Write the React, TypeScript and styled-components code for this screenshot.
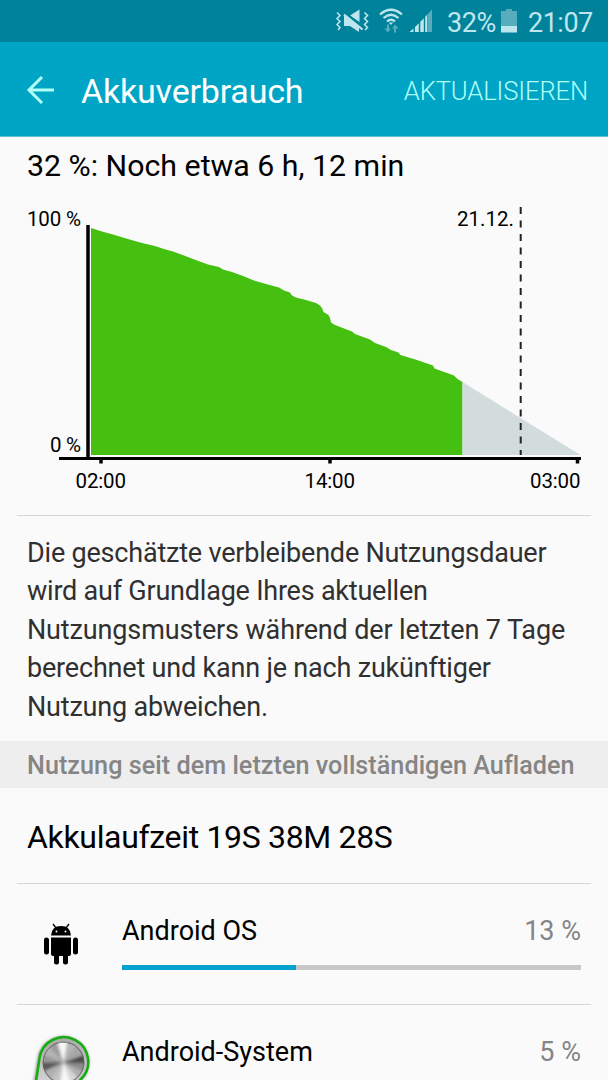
import React from "react";
import styled, { createGlobalStyle } from "styled-components";

const GlobalStyle = createGlobalStyle`
  html, body { margin: 0; padding: 0; height: 1080px; overflow: hidden; background: #fafafa; }
  * { box-sizing: border-box; }
`;

const Screen = styled.div`
  width: 608px;
  height: 1080px;
  overflow: hidden;
  background: #fafafa;
  color: #000;
  font-family: Roboto, "Liberation Sans", sans-serif;
  display: flex;
  flex-direction: column;
  & > * { flex-shrink: 0; }
`;

const StatusBar = styled.div`
  height: 42px;
  background: #00829b;
  color: #bfe6ee;
  display: flex;
  align-items: center;
  justify-content: flex-end;
  padding: 5px 16px 0 0;
  font-size: 27px;
  line-height: 37px;
`;

const StatusIcons = styled.svg`
  width: 112px;
  height: 42px;
  margin: -5px 0 0;
`;

const Percent = styled.span`
  width: 53px;
  margin-left: 5px;
  white-space: nowrap;
  letter-spacing: -0.4px;
`;

const BatteryIcon = styled.svg`
  width: 16px;
  height: 42px;
  margin: -5px 11px 0 1px;
`;

const Clock = styled.span`
  width: 64px;
  white-space: nowrap;
  letter-spacing: -0.5px;
`;

const AppBar = styled.header`
  height: 95px;
  background: #00a5c6;
  border-bottom: 1px solid #5bbfd3;
  display: flex;
  align-items: center;
  padding: 3px 20px 0 26px;
`;

const BackArrow = styled.svg`
  width: 30px;
  height: 30px;
  margin-top: -2px;
`;

const Title = styled.h1`
  margin: 0 0 0 25px;
  flex: 1;
  color: #fff;
  font-size: 34px;
  line-height: 40px;
  font-weight: 400;
  letter-spacing: -0.2px;
`;

const RefreshButton = styled.button`
  border: 0;
  padding: 0;
  background: none;
  color: #b0fff8;
  font-family: inherit;
  font-size: 25.6px;
  line-height: 32px;
  font-weight: 300;
  letter-spacing: -0.13px;
`;

const Estimate = styled.h2`
  margin: 0;
  height: 53px;
  padding: 9px 27px 0;
  font-size: 30.3px;
  line-height: 40px;
  font-weight: 400;
`;

const ChartImage = styled.svg`
  display: block;
  width: 608px;
  height: 325px;
`;

const Divider = styled.hr`
  width: 574px;
  height: 1px;
  margin: 0 17px;
  border: 0;
  background: #d6d6d6;
`;

const Note = styled.p`
  margin: 0;
  height: 225px;
  padding: 18px 20px 0 27px;
  color: #303030;
  font-size: 27px;
  line-height: 38.4px;
`;

const NoteLine = styled.span<{ $spacing: number }>`
  display: block;
  white-space: nowrap;
  letter-spacing: ${(p) => p.$spacing}px;
`;

const SectionHeader = styled.h3`
  margin: 0;
  height: 47px;
  padding: 0 27px;
  background: #eee;
  color: #858585;
  font-size: 25.2px;
  line-height: 49px;
  font-weight: 500;
  letter-spacing: 0.03px;
  white-space: nowrap;
`;

const Runtime = styled.p`
  margin: 0;
  height: 95px;
  padding: 2px 27px 0;
  font-size: 32px;
  line-height: 95px;
  letter-spacing: -0.33px;
`;

const UsageRow = styled.div`
  height: 120px;
  display: flex;
  padding: 0 27px;
`;

const IconCell = styled.div`
  width: 95px;
`;

const UsageBody = styled.div`
  flex: 1;
  padding-top: 28px;
`;

const UsageLabel = styled.div`
  display: flex;
  justify-content: space-between;
  font-size: 27px;
  line-height: 38px;
`;

const UsageValue = styled.span`
  color: #858585;
`;

const Track = styled.div`
  height: 5px;
  margin-top: 15px;
  background: #c8c8c8;
`;

const Fill = styled.div`
  height: 5px;
  background: #00a0cf;
`;

const RobotSvg = styled.svg`
  display: block;
  width: 36px;
  height: 44px;
  margin: 38px 0 0 16px;
`;

const KnobSvg = styled.svg`
  display: block;
  width: 70px;
  height: 75px;
  margin-top: 26px;
`;

function Indicators() {
  return (
    <StatusIcons viewBox="330 0 112 42">
      <g fill="none" stroke="#bfe6ee" strokeWidth="1.5">
        <path d="M337 12.500l3 3-3 3 3 3-3 3 3 3-2 2.500" />
        <path d="M364.500 12.500l3 3-3 3 3 3-3 3 3 3-2.500 2.500" />
      </g>
      <path fill="#bfe6ee" d="M344 16h3l12 11.500V32l-9-6h-6zM350 15.500l9.500-6V22z" />
      <path d="M346 13l17 14" stroke="#00829b" strokeWidth="1.500" />
      <path d="M344 14.500l18.500 15" stroke="#bfe6ee" strokeWidth="2.200" />
      <g fill="none" stroke="#bfe6ee" strokeWidth="2.300">
        <path d="M380 14.500q11-9.500 22 0" />
        <path d="M383.500 18q7.500-6.500 15 0" />
        <path d="M387 21.500q4-3.600 8 0" />
      </g>
      <path d="M388.700 22.500h4.600L391 25z" fill="#bfe6ee" />
      <path d="M387 24.500h2v4h2l-3.200 4-3.300-4H387zM394 32.500v-4h-2l3.200-4 3.300 4H396v4z" fill="#58adbd" />
      <path
        fill="#bfe6ee"
        d="M409.500 32l4-3.500V32zM415 27l3.800-3.700V32H415zM420.300 21.800l3.500-3.600V32h-3.500zM425.200 17l2-2.500V32h-2z"
      />
      <path d="M427.500 14.500l4.500-5V32h-4.500z" fill="#58adbd" />
    </StatusIcons>
  );
}

const LEVELS =
  "91,228 102,231.500 113,234.500 128,239 142,243 155,246 164,249 173,251.500 184,255.500 197,260.500 208,264.500 219,267 223,269.500 232,272 243,276 254,280.500 266,284 279,287.500 284,290.500 290,292.500 292,295.500 296,297.500 306,300 316,303 320,305.500 322,308 323.500,312 328.500,315 330,318 331,322.500 335,325 352,331.500 355,334 370,339.500 375,343 386,347 391,350 398.500,352.500 400.500,355 417,360 433,365.500 434.500,368.500 454,375.500 457.500,379 462.500,382 462.500,455 91,455";

function BatteryChart() {
  return (
    <ChartImage viewBox="0 190 608 325">
      <polygon points={LEVELS} fill="#45c011" />
      <polygon points="462.500,382 580.500,455 462.500,455" fill="#d3dcdd" />
      <path d="M520.700 206v249" stroke="#222" strokeWidth="2" strokeDasharray="7 6.500" strokeDashoffset="-1" />
      <path d="M88 225v232" stroke="#000" strokeWidth="3.500" />
      <path d="M59 458.500h522" stroke="#000" strokeWidth="3.200" />
      <path d="M101 459v4.500M330 459v4.500M577.500 459v4.500" stroke="#000" strokeWidth="3.500" />
      <g fontFamily="Roboto, sans-serif" fontSize="20.5" fill="#000">
        <text x="27" y="225.500" textLength="54">100 %</text>
        <text x="50" y="452" textLength="31">0 %</text>
        <text x="457" y="225.500" textLength="57">21.12.</text>
        <text x="75.500" y="487.500" textLength="50.500">02:00</text>
        <text x="304.500" y="487.500" textLength="50.500">14:00</text>
        <text x="530" y="487.500" textLength="50.500">03:00</text>
      </g>
    </ChartImage>
  );
}

function Robot() {
  return (
    <RobotSvg viewBox="43 922 36 44">
      <path d="M53 924l3 4M69 924l-3 4" stroke="#000" strokeWidth="1.300" />
      <path d="M51 935.500q.5-9.500 10-9.500t10 9.500z" />
      <circle cx="56.500" cy="931.500" r="1" fill="#fafafa" />
      <circle cx="65.500" cy="931.500" r="1" fill="#fafafa" />
      <path d="M51 937.500h20v16.500q0 2-2 2H53q-2 0-2-2z" />
      <rect x="44" y="937.500" width="5" height="17" rx="2.500" />
      <rect x="73" y="937.500" width="5" height="17" rx="2.500" />
      <rect x="54" y="950" width="5" height="14.500" rx="2.300" />
      <rect x="63" y="950" width="5" height="14.500" rx="2.300" />
    </RobotSvg>
  );
}

function Knob() {
  const wedges = [
    ["#b5b5b5", 30], ["#a5a5a5", 52], ["#4a4a4a", 84], ["#8c8c8c", 106], ["#b0b0b0", 128], ["#d8d8d8", 152],
    ["#c4c4c4", 205], ["#b0b0b0", 230], ["#585858", 260], ["#999999", 284], ["#b4b4b4", 306], ["#9c9c9c", 332],
    ["#f8f8f8", -3], ["#f8f8f8", 176],
  ] as const;
  return (
    <KnobSvg viewBox="27 1031 70 75">
      <defs>
        <filter id="shade" x="-20%" y="-20%" width="140%" height="140%"><feGaussianBlur stdDeviation="1.500" /></filter>
        <filter id="blend"><feGaussianBlur stdDeviation="1.500" /></filter>
        <clipPath id="disc"><circle cx="63.500" cy="1062.500" r="20.500" /></clipPath>
        <linearGradient id="rim" x2="0" y2="1"><stop stopColor="#aaa" /><stop offset="1" stopColor="#ddd" /></linearGradient>
      </defs>
      <path d="M33 1095L39 1058A24.500 24.500 0 1 1 80 1080L70 1095z" fill="#999" stroke="#999" strokeWidth="3" filter="url(#shade)" />
      <path d="M34 1095L39.500 1058A24.500 24.500 0 1 1 80 1080L70 1095z" fill="url(#rim)" stroke="#16ad12" strokeWidth="2.600" />
      <circle cx="63.500" cy="1062.500" r="21" fill="#6a6a6a" />
      <g clipPath="url(#disc)">
        <circle cx="63.500" cy="1062.500" r="20" fill="#aaa" />
        <g filter="url(#blend)">
          {wedges.map(([color, angle]) => (
            <path key={angle} d="M63.500 1062.500l-6-24h12z" fill={color} transform={`rotate(${angle} 63.500 1062.500)`} />
          ))}
        </g>
        <circle cx="63.500" cy="1062.500" r="20.300" fill="none" stroke="#666" strokeWidth="1" />
      </g>
    </KnobSvg>
  );
}

export default function App() {
  return (
    <Screen>
      <GlobalStyle />
      <StatusBar>
        <Indicators />
        <Percent>32%</Percent>
        <BatteryIcon viewBox="0 0 16 42">
          <path d="M0 11h5V9h6v2h5v15H0z" fill="#58adbd" />
          <path d="M0 26h16v6.500H0z" fill="#bfe6ee" />
        </BatteryIcon>
        <Clock>21:07</Clock>
      </StatusBar>
      <AppBar>
        <BackArrow viewBox="26 75 30 30">
          <path d="M54 90H29M42 77L29 90l13 13" fill="none" stroke="#b0fff8" strokeWidth="3" />
        </BackArrow>
        <Title>Akkuverbrauch</Title>
        <RefreshButton>AKTUALISIEREN</RefreshButton>
      </AppBar>
      <Estimate>32 %: Noch etwa 6 h, 12 min</Estimate>
      <BatteryChart />
      <Divider />
      <Note>
        <NoteLine $spacing={-0.2}>Die geschätzte verbleibende Nutzungsdauer</NoteLine>
        <NoteLine $spacing={-0.22}>wird auf Grundlage Ihres aktuellen</NoteLine>
        <NoteLine $spacing={-0.14}>Nutzungsmusters während der letzten 7 Tage</NoteLine>
        <NoteLine $spacing={-0.19}>berechnet und kann je nach zukünftiger</NoteLine>
        <NoteLine $spacing={-0.2}>Nutzung abweichen.</NoteLine>
      </Note>
      <SectionHeader>Nutzung seit dem letzten vollständigen Aufladen</SectionHeader>
      <Runtime>Akkulaufzeit 19S 38M 28S</Runtime>
      <Divider />
      <UsageRow>
        <IconCell><Robot /></IconCell>
        <UsageBody>
          <UsageLabel><span>Android OS</span><UsageValue>13 %</UsageValue></UsageLabel>
          <Track><Fill style={{ width: `${13 / 0.342}%` }} /></Track>
        </UsageBody>
      </UsageRow>
      <Divider />
      <UsageRow>
        <IconCell><Knob /></IconCell>
        <UsageBody>
          <UsageLabel><span>Android-System</span><UsageValue>5 %</UsageValue></UsageLabel>
        </UsageBody>
      </UsageRow>
    </Screen>
  );
}
